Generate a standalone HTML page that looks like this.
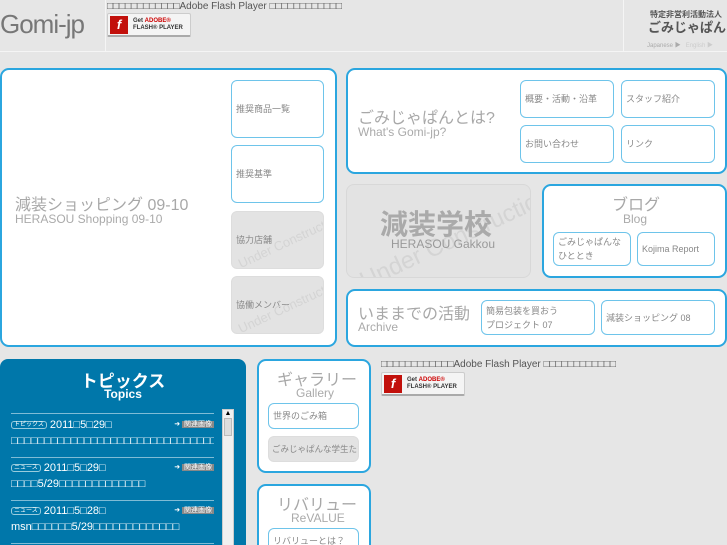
<!DOCTYPE html><html style="overflow:hidden"><head><meta charset="utf-8"><style>
*{margin:0;padding:0;box-sizing:border-box}
html,body{width:727px;height:545px;overflow:hidden}
body{background:#e6e6e6;position:relative;font-family:"Liberation Sans","Noto Sans CJK JP",sans-serif;color:#999}
.a{position:absolute;white-space:nowrap}
.box{position:absolute;background:#fff;border:2px solid #2ba6df;border-radius:9px}
.btn{position:absolute;background:#fff;border:1.5px solid #6ec4ea;border-radius:6px;font-size:9px;color:#888;display:flex;align-items:center;padding-left:4px;line-height:14px;white-space:nowrap}
.gray{background:#e3e3e3;border:1px solid #ddd}
.uc{position:absolute;color:#d4d4d4;transform:rotate(-25deg);font-size:13px;white-space:nowrap}
.t1{position:absolute;font-size:16px;color:#a8a8a8;white-space:nowrap}
.t2{position:absolute;font-size:12px;color:#aaa;white-space:nowrap}
.fb{position:absolute;width:84px;height:24px;background:#f4f4f4;border:1px solid #ccc;border-bottom:2px solid #aaa;border-radius:2px}
.fb i{position:absolute;left:2px;top:2px;width:18px;height:18px;background:#c2100b;color:#fff;font-style:italic;font-weight:bold;font-size:13px;text-align:center;line-height:18px}
.fb span{position:absolute;left:25px;top:4px;font-size:6px;color:#333;line-height:7px;font-weight:bold}
.tofu{font-size:10px;color:#555}
.tp{position:absolute;left:11px;width:203px;font-size:11px;line-height:16px;overflow:hidden;white-space:nowrap}
.tag{font-size:6px;border:1px solid #9cd;border-radius:3px;padding:0 2px;vertical-align:2px}
.rel{position:absolute;right:0;top:0;font-size:7px}
.rel span{background:#888;padding:0 2px}
</style></head><body>
<div class="a" style="left:0;top:0;width:727px;height:52px;border-bottom:1px solid #f5f5f5"></div>
<div class="a" style="left:0;top:9px;font-size:26px;color:#777;letter-spacing:-1px">Gomi-jp</div>
<div class="a" style="left:105px;top:0;width:1px;height:52px;background:#f5f5f5"></div>
<div class="a" style="left:623px;top:0;width:1px;height:52px;background:#f5f5f5"></div>
<div class="a tofu" style="left:107px;top:1px">□□□□□□□□□□□□Adobe Flash Player □□□□□□□□□□□□</div>
<div class="fb" style="left:107px;top:13px"><i>f</i><span>Get <b style="color:#c00">ADOBE®</b><br>FLASH® PLAYER</span></div>
<div class="a" style="left:650px;top:9px;font-size:8px;color:#555;font-weight:bold">特定非営利活動法人</div>
<div class="a" style="left:648px;top:17px;font-size:13px;color:#555;font-weight:bold">ごみじゃぱん</div>
<div class="a" style="left:647px;top:40px;font-size:6px;color:#aaa">Japanese ▶ &nbsp; <span style="color:#ccc">English ▶</span></div>

<div class="box" style="left:0;top:68px;width:337px;height:279px"></div>
<div class="t1" style="left:15px;top:191px">減装ショッピング 09-10</div>
<div class="t2" style="left:15px;top:212px">HERASOU Shopping 09-10</div>
<div class="btn" style="left:231px;top:80px;width:93px;height:58px">推奨商品一覧</div>
<div class="btn" style="left:231px;top:145px;width:93px;height:58px">推奨基準</div>
<div class="btn gray" style="left:231px;top:211px;width:93px;height:58px;overflow:hidden">協力店舗<div class="uc" style="left:2px;top:22px">Under Construction</div></div>
<div class="btn gray" style="left:231px;top:276px;width:93px;height:58px;overflow:hidden">協働メンバー<div class="uc" style="left:2px;top:22px">Under Construction</div></div>

<div class="box" style="left:346px;top:68px;width:381px;height:106px"></div>
<div class="t1" style="left:358px;top:104px">ごみじゃぱんとは?</div>
<div class="t2" style="left:358px;top:125px">What's Gomi-jp?</div>
<div class="btn" style="left:520px;top:80px;width:94px;height:38px">概要・活動・沿革</div>
<div class="btn" style="left:621px;top:80px;width:94px;height:38px">スタッフ紹介</div>
<div class="btn" style="left:520px;top:125px;width:94px;height:38px">お問い合わせ</div>
<div class="btn" style="left:621px;top:125px;width:94px;height:38px">リンク</div>

<div class="a" style="left:346px;top:184px;width:185px;height:94px;background:#e3e3e3;border:1px solid #d8d8d8;border-radius:8px;overflow:hidden">
<div class="uc" style="left:5px;top:40px;font-size:24px">Under Construction</div>
<div class="a" style="left:33px;top:18px;font-size:28px;color:#aaa;font-weight:bold">減装学校</div>
<div class="a" style="left:44px;top:52px;font-size:12px;color:#999">HERASOU Gakkou</div></div>

<div class="box" style="left:542px;top:184px;width:185px;height:94px"></div>
<div class="t1" style="left:612px;top:191px">ブログ</div>
<div class="t2" style="left:623px;top:212px">Blog</div>
<div class="btn" style="left:553px;top:232px;width:78px;height:34px">ごみじゃぱんな<br>ひととき</div>
<div class="btn" style="left:637px;top:232px;width:78px;height:34px">Kojima Report</div>

<div class="box" style="left:346px;top:289px;width:381px;height:58px"></div>
<div class="t1" style="left:358px;top:300px">いままでの活動</div>
<div class="t2" style="left:358px;top:320px">Archive</div>
<div class="btn" style="left:481px;top:300px;width:114px;height:35px">簡易包装を買おう<br>プロジェクト 07</div>
<div class="btn" style="left:601px;top:300px;width:114px;height:35px">減装ショッピング 08</div>

<div class="a" style="left:0;top:359px;width:246px;height:190px;background:#0077aa;border-radius:8px 8px 0 0;color:#fff">
<div class="a" style="left:0;width:246px;top:8px;text-align:center;font-size:17px;font-weight:bold">トピックス</div>
<div class="a" style="left:0;width:246px;top:28px;text-align:center;font-size:12px;font-weight:bold">Topics</div>
<div class="a" style="left:11px;top:54px;width:203px;height:1px;background:#7fbcd6"></div>
<div class="a" style="left:222px;top:50px;width:12px;height:140px;background:#f0f0f0;border:1px solid #ccc"><div style="font-size:7px;color:#000;text-align:center">▲</div><div style="margin:1px;height:18px;background:#ddd;border:1px solid #bbb"></div></div>
<div class="tp" style="top:58px"><span class="tag">トピックス</span> 2011□5□29□<div class="rel">➜ <span>関連画像</span></div><br>□□□□□□□□□□□□□□□□□□□□□□□□□□□□□□□□□</div>
<div class="a" style="left:11px;top:98px;width:203px;height:1px;background:#7fbcd6"></div>
<div class="tp" style="top:101px"><span class="tag">ニュース</span> 2011□5□29□<div class="rel">➜ <span>関連画像</span></div><br>□□□□5/29□□□□□□□□□□□□□</div>
<div class="a" style="left:11px;top:141px;width:203px;height:1px;background:#7fbcd6"></div>
<div class="tp" style="top:144px"><span class="tag">ニュース</span> 2011□5□28□<div class="rel">➜ <span>関連画像</span></div><br>msn□□□□□□5/29□□□□□□□□□□□□□</div>
<div class="a" style="left:11px;top:184px;width:203px;height:1px;background:#7fbcd6"></div>
</div>

<div class="box" style="left:257px;top:359px;width:114px;height:114px"></div>
<div class="t1" style="left:277px;top:366px">ギャラリー</div>
<div class="t2" style="left:296px;top:386px">Gallery</div>
<div class="btn" style="left:268px;top:403px;width:91px;height:26px">世界のごみ箱</div>
<div class="btn gray" style="left:268px;top:436px;width:91px;height:26px;overflow:hidden;font-size:8.5px;padding-left:3px">ごみじゃぱんな学生たち</div>
<div class="box" style="left:257px;top:484px;width:114px;height:70px"></div>
<div class="t1" style="left:277px;top:491px">リバリュー</div>
<div class="t2" style="left:291px;top:511px">ReVALUE</div>
<div class="btn" style="left:268px;top:528px;width:91px;height:26px">リバリューとは？</div>

<div class="a tofu" style="left:381px;top:359px">□□□□□□□□□□□□Adobe Flash Player □□□□□□□□□□□□</div>
<div class="fb" style="left:381px;top:372px"><i>f</i><span>Get <b style="color:#c00">ADOBE®</b><br>FLASH® PLAYER</span></div>
</body></html>
